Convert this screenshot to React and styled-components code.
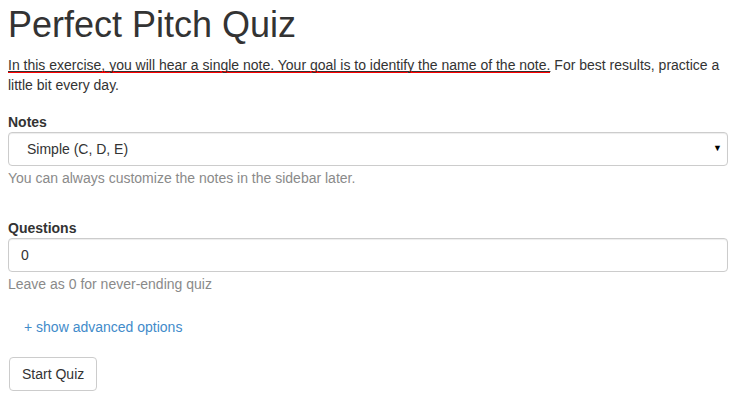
import React from "react";
import styled, { createGlobalStyle } from "styled-components";

const Global = createGlobalStyle`
  html, body { margin: 0; padding: 0; background: #fff; }
  body {
    font-family: "Liberation Sans", Arial, sans-serif;
    font-size: 14px;
    line-height: 1.42857143;
    color: #333;
  }
  * { box-sizing: border-box; }
`;

const Page = styled.div`
  padding: 5px 9px 0 8px;
`;

const Title = styled.h1`
  font-size: 36px;
  font-weight: 500;
  line-height: 1.1;
  margin: 0 0 10px;
  color: #333;
`;

const Intro = styled.p`
  margin: 0 0 17px;
`;

const Marked = styled.span`
  text-decoration: underline;
  text-decoration-thickness: 1px;
  text-underline-offset: 1px;
  background-image: linear-gradient(#f00, #f00);
  background-repeat: no-repeat;
  background-size: 100% 2px;
  background-position: 0 14.5px;
`;

const Form = styled.form`
  display: flex;
  flex-direction: column;
`;

const Group = styled.div`
  display: flex;
  flex-direction: column;
  margin-bottom: ${(p) => p.$gap || 15}px;
`;

const Label = styled.label`
  font-weight: bold;
  margin-bottom: 0;
`;

const Field = styled.div`
  display: flex;
  align-items: center;
  height: 34px;
  padding: 6px 12px 6px ${(p) => (p.$select ? 18 : 12)}px;
  border: 1px solid #ccc;
  border-radius: 4px;
  background: #fff;
  color: #333;
  box-shadow: inset 0 1px 1px rgba(0, 0, 0, 0.075);
`;

const Arrow = styled.span`
  margin-left: auto;
  font-size: 9px;
  color: #000;
  margin-right: -7px;
`;

const Help = styled.span`
  margin-top: 2px;
  color: #8a8a8a;
`;

const AdvLink = styled.a`
  color: #428bca;
  text-decoration: none;
  padding: 0 16px;
  margin-bottom: 20px;
  align-self: flex-start;
`;

const Button = styled.button`
  align-self: flex-start;
  font-family: inherit;
  font-size: 14px;
  line-height: 1.42857143;
  color: #333;
  background: #fff;
  border: 1px solid #ccc;
  border-radius: 4px;
  padding: 6px 12px;
  margin-left: 1px;
`;

export default function App() {
  return (
    <>
      <Global />
      <Page>
        <Title>Perfect Pitch Quiz</Title>
        <Intro>
          <Marked>
            In this exercise, you will hear a single note. Your goal is to identify the name of the note.
          </Marked>{" "}
          For best results, practice a little bit every day.
        </Intro>
        <Form>
          <Group $gap={30}>
            <Label>Notes</Label>
            <Field $select>
              Simple (C, D, E)
              <Arrow>▼</Arrow>
            </Field>
            <Help>You can always customize the notes in the sidebar later.</Help>
          </Group>
          <Group $gap={23}>
            <Label>Questions</Label>
            <Field>0</Field>
            <Help>Leave as 0 for never-ending quiz</Help>
          </Group>
          <AdvLink href="#">+ show advanced options</AdvLink>
          <Button type="button">Start Quiz</Button>
        </Form>
      </Page>
    </>
  );
}
